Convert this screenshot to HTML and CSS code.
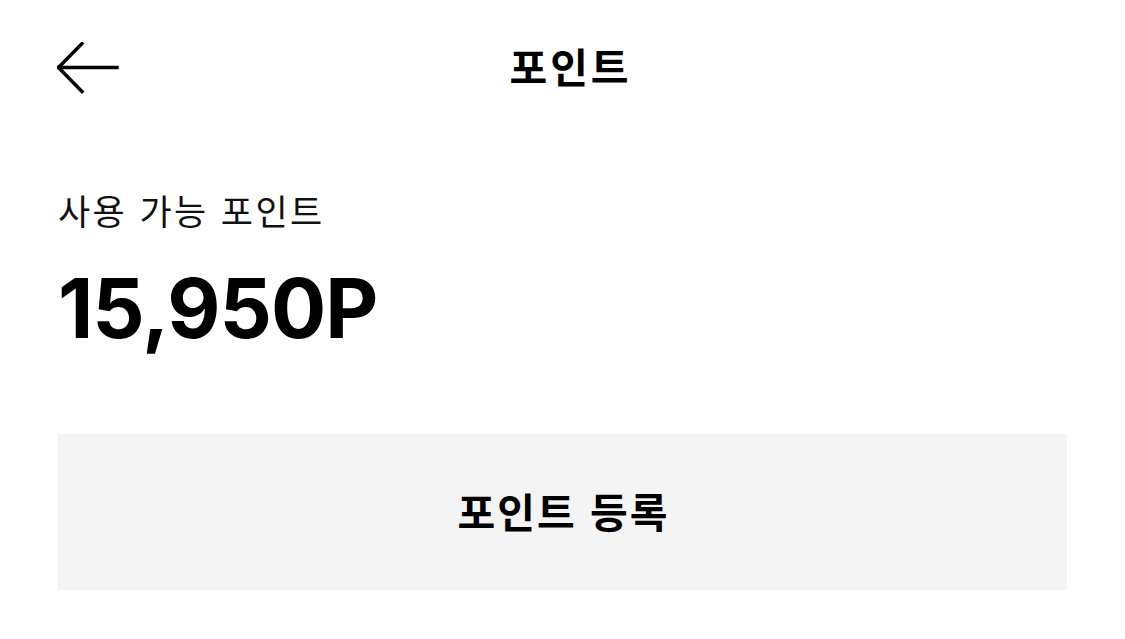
FILE: index.html
```html
<!DOCTYPE html>
<html lang="ko">
<head>
<meta charset="utf-8">
<title>포인트</title>
<link rel="stylesheet" href="styles.css">
</head>
<body>
<div class="page">
  <header class="header">
    <button class="back" aria-label="뒤로">
      <svg width="64" height="56" viewBox="0 0 64 56" fill="none" stroke="#000" stroke-width="3.4" stroke-linecap="square">
        <path d="M1.5 25.5H60"/>
        <path d="M25 1.5L1.5 25.5L25 49.5"/>
      </svg>
    </button>
    <h1 class="title">포인트</h1>
  </header>
  <section class="summary">
    <div class="label">사용 가능 포인트</div>
    <div class="amount">15,950P</div>
  </section>
  <button class="register">포인트 등록</button>
</div>
</body>
</html>
```
FILE: styles.css
```css
html, body {
  margin: 0;
  padding: 0;
  background: #fff;
}
body {
  font-family: "Noto Sans CJK KR", "Noto Sans", sans-serif;
  color: #000;
}
.page {
  padding: 0 58px;
}
.header {
  position: relative;
  height: 130px;
  display: flex;
  align-items: center;
  justify-content: center;
}
.back {
  position: absolute;
  left: -1px;
  top: 42px;
  padding: 0;
  border: 0;
  background: none;
  display: flex;
}
.title {
  margin: 0;
  font-size: 41px;
  font-weight: 700;
  letter-spacing: 3px;
  margin-left: 16px;
}
.summary {
  padding-top: 56px;
}
.label {
  font-size: 35px;
  font-weight: 400;
  line-height: 48px;
  letter-spacing: 2.4px;
  color: #111;
}
.amount {
  font-family: Inter, "Noto Sans", sans-serif;
  font-weight: 700;
  font-size: 82px;
  line-height: 100px;
  margin-top: 25px;
  letter-spacing: -1px;
}
.register {
  display: flex;
  align-items: center;
  justify-content: center;
  width: 100%;
  height: 156px;
  margin-top: 75px;
  border: 0;
  background: #f4f4f4;
  font-family: "Noto Sans CJK KR", "Noto Sans", sans-serif;
  font-size: 41px;
  font-weight: 700;
  letter-spacing: 2px;
  padding: 0 0 4px 2px;
  color: #000;
}
```
